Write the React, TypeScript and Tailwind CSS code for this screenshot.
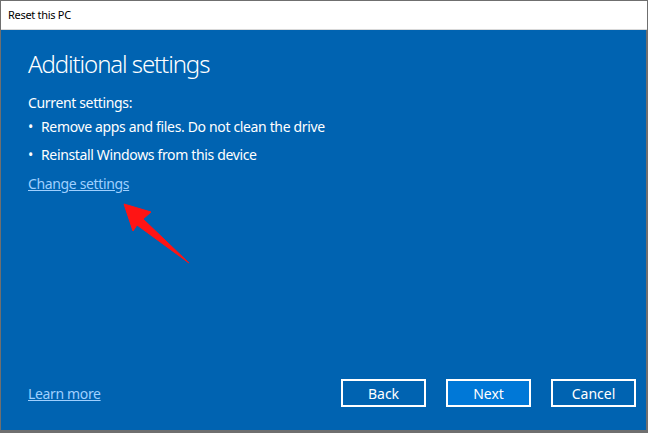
export default function App() {
  return (
    <div
      className="relative w-[648px] h-[433px] flex flex-col bg-[#6f6f6f] overflow-hidden"
      style={{ fontFamily: '"Noto Sans", "Open Sans", sans-serif' }}
    >
      {/* Title bar */}
      <div className="mt-px mx-px h-[29px] bg-white flex items-center px-[7px] text-[11px] tracking-[-0.3px] text-black border-b border-[#d9d9d9]">
        Reset this PC
      </div>

      {/* Dialog body */}
      <div className="ml-px mr-[2px] flex-1 mb-[3px] bg-[#0063b1] flex flex-col text-white pl-[27px] pr-[10px]">
        <h1 className="mt-[17px] text-[24px] font-light leading-[34px] tracking-[-1.1px]">Additional settings</h1>
        <p className="mt-[11px] text-[14px] leading-[22px] tracking-[-0.35px]">Current settings:</p>
        <ul className="mt-[2px] text-[14px] leading-[22px] tracking-[-0.35px]">
          <li className="flex">
            <span className="w-[13px]">•</span>Remove apps and files. Do not clean the drive
          </li>
          <li className="flex mt-[6px]">
            <span className="w-[13px]">•</span>Reinstall Windows from this device
          </li>
        </ul>
        <a className="mt-[7px] text-[14px] leading-[22px] tracking-[-0.35px] text-[#9fd0ff] underline self-start">Change settings</a>

        <div className="flex-1" />

        {/* Footer */}
        <div className="flex items-center mb-[23px]">
          <a className="text-[14px] tracking-[-0.35px] text-[#9fd0ff] underline">Learn more</a>
          <div className="ml-auto flex gap-[20px]">
            <button className="w-[85px] h-[28px] border-2 border-white text-[14px]">Back</button>
            <button className="w-[85px] h-[28px] border-2 border-white bg-[#0078d7] text-[14px]">Next</button>
            <button className="w-[85px] h-[28px] border-2 border-white text-[14px]">Cancel</button>
          </div>
        </div>
      </div>

      {/* Red annotation arrow */}
      <svg className="absolute left-0 top-0 pointer-events-none" width="648" height="433">
        <polygon
          points="124,204 151,212 143,219 189,263 137,225 133,231"
          fill="#ff1414"
          stroke="#ff1414"
          strokeWidth="1"
          strokeLinejoin="round"
        />
      </svg>
    </div>
  )
}
